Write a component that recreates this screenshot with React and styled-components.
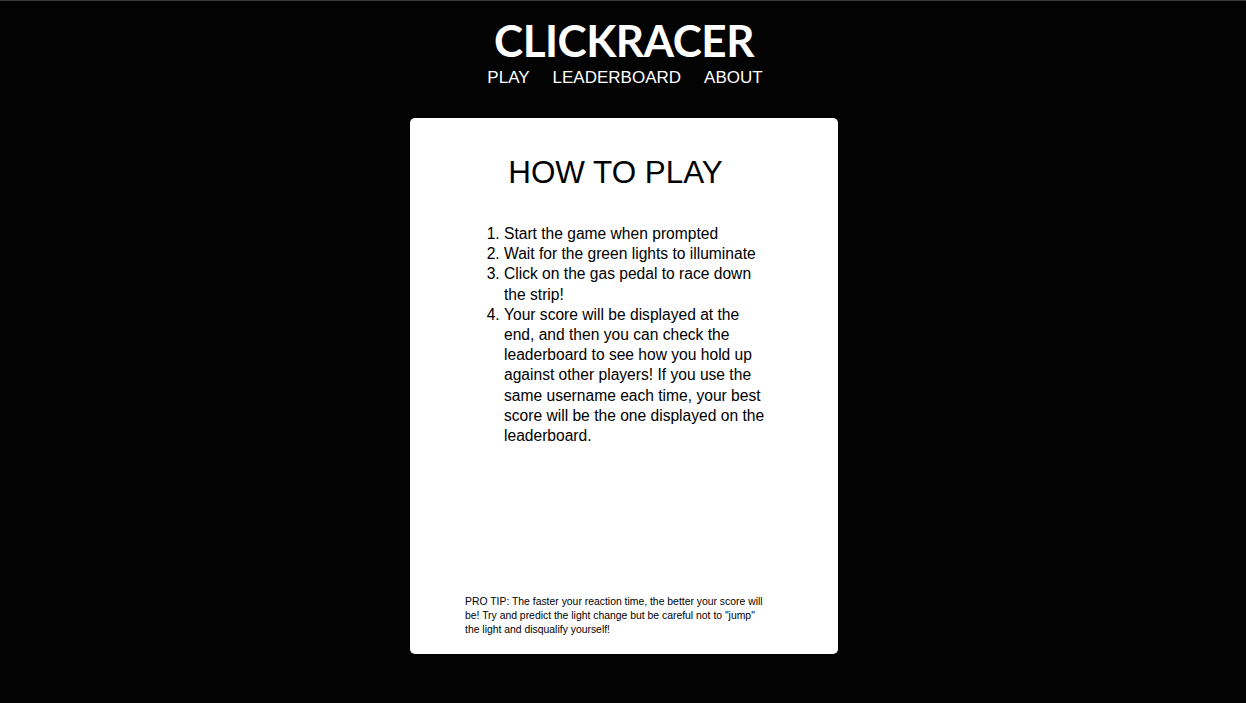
import React from "react";
import styled, { createGlobalStyle } from "styled-components";

const GlobalStyle = createGlobalStyle`
  html, body {
    margin: 0;
    padding: 0;
    background: #030303;
  }
  body {
    font-family: "Liberation Sans", Arial, sans-serif;
    color: #fff;
  }
`;

const steps = [
  "Start the game when prompted",
  "Wait for the green lights to illuminate",
  "Click on the gas pedal to race down the strip!",
  "Your score will be displayed at the end, and then you can check the leaderboard to see how you hold up against other players! If you use the same username each time, your best score will be the one displayed on the leaderboard.",
];

export default function App() {
  return (
    <Root>
      <GlobalStyle />
      <Header>
        <Logo>CLICKRACER</Logo>
        <Nav>
          <NavLink href="#">PLAY</NavLink>
          <NavLink href="#">LEADERBOARD</NavLink>
          <NavLink href="#">ABOUT</NavLink>
        </Nav>
      </Header>
      <Card>
        <Content>
          <Title>HOW TO PLAY</Title>
          <Steps>
            {steps.map((s) => (
              <li key={s}>{s}</li>
            ))}
          </Steps>
        </Content>
        <Tip>
          PRO TIP: The faster your reaction time, the better your score will
          be! Try and predict the light change but be careful not to "jump"
          the light and disqualify yourself!
        </Tip>
      </Card>
    </Root>
  );
}

const Root = styled.main`
  min-height: 703px;
  box-sizing: border-box;
  border-top: 1px solid #3c3c3c;
  padding-left: 2px;
  display: flex;
  flex-direction: column;
  align-items: center;
`;

const Header = styled.header`
  display: flex;
  flex-direction: column;
  align-items: center;
  padding-top: 14px;
`;

const Logo = styled.h1`
  margin: 0;
  font-family: Lato, "Open Sans", sans-serif;
  font-weight: 700;
  font-size: 44px;
  line-height: 50px;
  letter-spacing: -0.5px;
  color: #fff;
`;

const Nav = styled.nav`
  display: flex;
  gap: 23px;
  margin-top: 3px;
  padding-left: 2px;
`;

const NavLink = styled.a`
  color: #fff;
  text-decoration: none;
  font-size: 17px;
  line-height: 20px;
`;

const Card = styled.section`
  margin-top: 30px;
  width: 428px;
  height: 536px;
  box-sizing: border-box;
  background: #fff;
  border-radius: 5px;
  color: #000;
  padding: 36px 72px 17px 55px;
  display: flex;
  flex-direction: column;
  justify-content: space-between;
`;

const Content = styled.div``;

const Title = styled.h2`
  margin: 0;
  text-align: center;
  font-weight: 400;
  font-size: 31.4px;
  line-height: 37px;
`;

const Steps = styled.ol`
  margin: 33px 0 0;
  padding-left: 39px;
  font-size: 15.6px;
  line-height: 20.2px;
`;

const Tip = styled.p`
  margin: 0;
  font-size: 10.4px;
  line-height: 14px;
`;
